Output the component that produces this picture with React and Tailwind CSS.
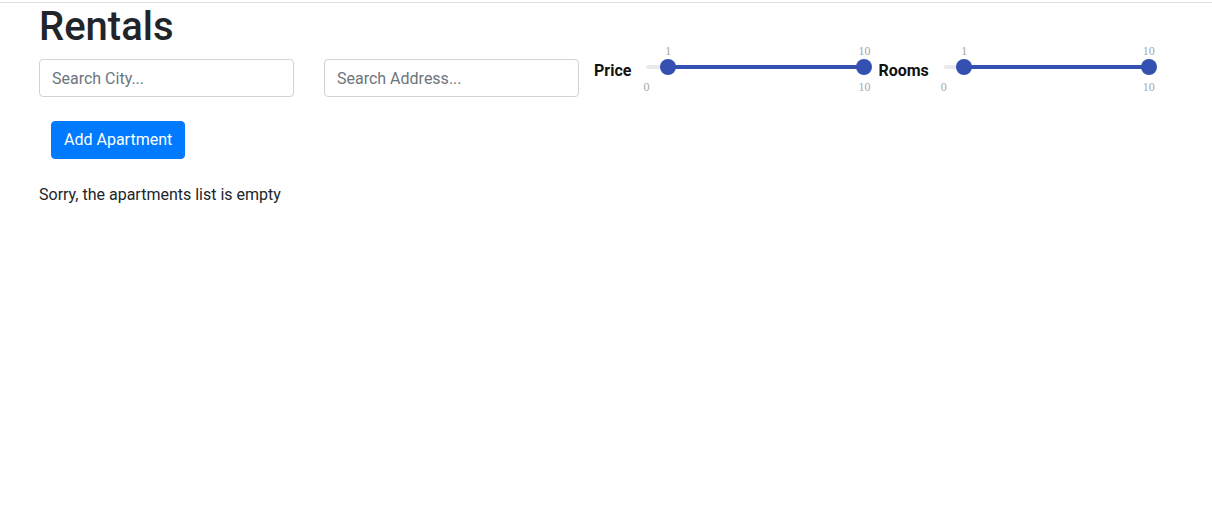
import React from 'react';

const font = { fontFamily: 'Roboto, "Liberation Sans", sans-serif' };

function RangeSlider({ width, min, max, low, high }) {
  const pos = (v) => ((v - min) / (max - min)) * width;

  return (
    <div className="relative h-4 shrink-0" style={{ width }}>
      <div className="absolute left-0 right-0 top-[6px] h-1 rounded-full bg-[#e9e9e9]" />
      <div
        className="absolute top-[6px] h-1 bg-[#3451b2]"
        style={{ left: pos(low), width: pos(high) - pos(low) }}
      />
      {[low, high].map((v, i) => (
        <React.Fragment key={i}>
          <div
            className="absolute top-0 h-4 w-4 -translate-x-1/2 rounded-full bg-[#3451b2]"
            style={{ left: pos(v) }}
          />
          <span
            className="absolute top-[-16px] -translate-x-1/2 font-['Liberation_Serif',serif] text-xs text-[#a6a6a6]"
            style={{ left: pos(v) }}
          >
            {v}
          </span>
        </React.Fragment>
      ))}
      {[min, max].map((v, i) => (
        <span
          key={i}
          className="absolute top-[20px] -translate-x-1/2 font-['Liberation_Serif',serif] text-xs text-[#a6a6a6]"
          style={{ left: pos(v) }}
        >
          {v}
        </span>
      ))}
    </div>
  );
}

export default function App() {
  return (
    <div className="min-h-screen bg-white text-[#212529]" style={font}>
      <div className="mt-[2px] border-t border-[#dee2e6]" />
      <div className="pl-[39px]">
        <h1 className="text-[40px] font-medium leading-[1.2]">Rentals</h1>

        <div className="mt-2 flex items-start">
          <input
            type="text"
            placeholder="Search City..."
            className="h-[38px] w-[255px] rounded border border-[#ced4da] px-3 text-base placeholder:text-[#6c757d] outline-none"
          />
          <input
            type="text"
            placeholder="Search Address..."
            className="ml-[30px] h-[38px] w-[255px] rounded border border-[#ced4da] px-3 text-base placeholder:text-[#6c757d] outline-none"
          />

          <span className="ml-[15px] text-base font-bold leading-6 text-[#111]">Price</span>
          <div className="ml-[15px]">
            <RangeSlider width={218} min={0} max={10} low={1} high={10} />
          </div>

          <span className="ml-[14px] text-base font-bold leading-6 text-[#111]">Rooms</span>
          <div className="ml-[15px]">
            <RangeSlider width={205} min={0} max={10} low={1} high={10} />
          </div>
        </div>

        <button className="ml-3 mt-6 rounded border border-[#007bff] bg-[#007bff] px-3 py-1.5 text-base leading-6 text-white hover:bg-[#0069d9]">
          Add Apartment
        </button>

        <p className="mt-6 text-base leading-6">Sorry, the apartments list is empty</p>
      </div>
    </div>
  );
}
